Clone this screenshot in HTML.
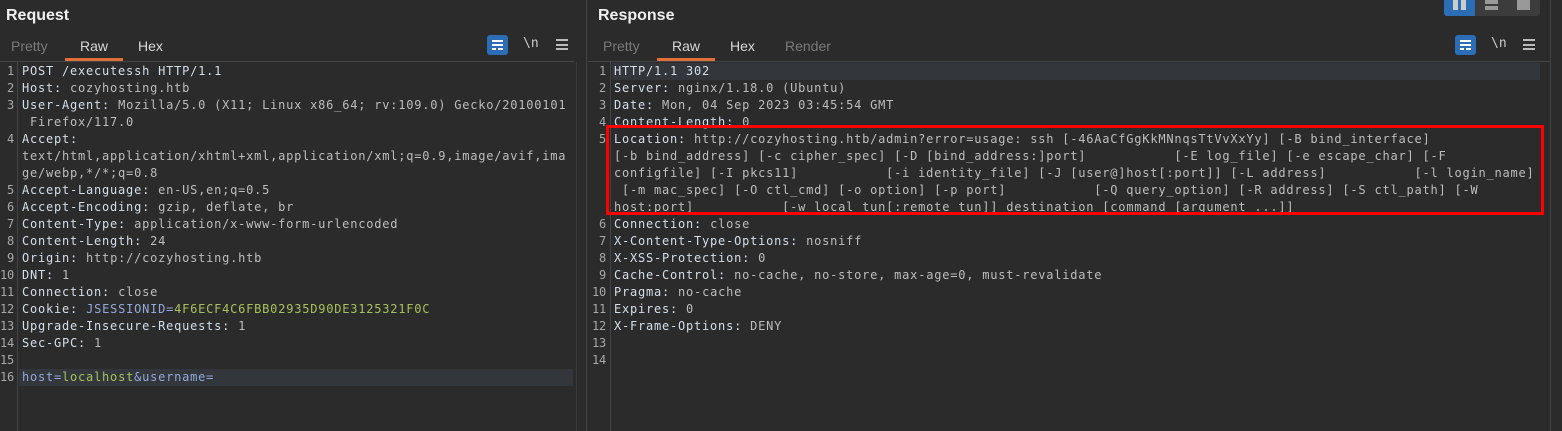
<!DOCTYPE html>
<html><head><meta charset="utf-8"><style>
*{margin:0;padding:0;box-sizing:border-box}
body{width:1562px;height:431px;background:#2b2b2b;overflow:hidden;position:relative;font-family:"Liberation Sans","DejaVu Sans",sans-serif}
.title{position:absolute;top:7px;font-size:16px;font-weight:bold;color:#f0f0f0}
.tab{position:absolute;top:38px;font-size:14px;color:#d8d8d8}
.dim{color:#7a7a7a}
.ul{position:absolute;top:58px;height:3px;background:#e0703a}
.hr{position:absolute;top:61px;height:1px;background:#444}
.vl{position:absolute;width:1px;background:#444}
.code{position:absolute;font-family:"DejaVu Sans Mono",monospace;font-size:12px;letter-spacing:0.78px;line-height:17px;white-space:pre;color:#bdbdbd}
.ln{position:absolute;font-family:"DejaVu Sans Mono",monospace;font-size:12px;letter-spacing:-0.2px;line-height:17px;white-space:pre;color:#a8a8a8;text-align:right}
.k{color:#d4deea}
.b{color:#93a9dc}
.g{color:#a7c25a}
.hl{position:absolute;height:17px;background:#33373b}
.wrap{position:absolute;top:35px;width:21px;height:20px;background:#2c6eb5;border-radius:3px}
.wrap i{position:absolute;left:5px;height:2px;background:#fff}
.nl{position:absolute;top:36px;font-family:"DejaVu Sans Mono",monospace;font-size:13px;color:#ccc}
.menu{position:absolute;top:39px;width:12px;height:11px;border-top:2px solid #bbb;border-bottom:2px solid #bbb}
.menu:after{content:"";position:absolute;left:0;right:0;top:2.5px;height:2px;background:#bbb}
</style></head><body>
<div class="title" style="left:6px">Request</div>
<div class="title" style="left:598px">Response</div>

<div class="tab dim" style="left:11px">Pretty</div>
<div class="tab" style="left:80px">Raw</div>
<div class="tab" style="left:138px">Hex</div>
<div class="ul" style="left:65px;width:58px"></div>
<div class="hr" style="left:0;width:574px"></div>

<div class="tab dim" style="left:603px">Pretty</div>
<div class="tab" style="left:672px">Raw</div>
<div class="tab" style="left:730px">Hex</div>
<div class="tab dim" style="left:785px">Render</div>
<div class="ul" style="left:657px;width:58px"></div>
<div class="hr" style="left:588px;width:962px"></div>

<div class="vl" style="left:586px;top:0;height:431px"></div>
<div class="vl" style="left:576px;top:62px;height:369px;background:#3a3a3a"></div>
<div class="vl" style="left:1550px;top:0;height:431px"></div>
<div class="vl" style="left:17px;top:62px;height:369px"></div>
<div class="vl" style="left:610px;top:62px;height:369px"></div>

<div class="wrap" style="left:487px"><i style="top:5px;width:11px"></i><i style="top:9px;width:11px"></i><i style="top:13px;width:4px"></i><i style="top:13px;left:11px;width:5px"></i></div>
<div class="nl" style="left:523px">\n</div>
<div class="menu" style="left:556px"></div>
<div class="wrap" style="left:1455px"><i style="top:5px;width:11px"></i><i style="top:9px;width:11px"></i><i style="top:13px;width:4px"></i><i style="top:13px;left:11px;width:5px"></i></div>
<div class="nl" style="left:1491px">\n</div>
<div class="menu" style="left:1523px"></div>

<div style="position:absolute;left:1444px;top:-4px;width:96px;height:20px;background:#3c3c3c;border-radius:3px"></div>
<div style="position:absolute;left:1444px;top:-4px;width:31px;height:20px;background:#2c6eb5;border-radius:3px 0 0 3px"></div>
<div style="position:absolute;left:1453px;top:0;width:5px;height:10px;background:#ccc"></div>
<div style="position:absolute;left:1461px;top:0;width:5px;height:10px;background:#ccc"></div>
<div style="position:absolute;left:1485px;top:0;width:13px;height:4px;background:#999"></div>
<div style="position:absolute;left:1485px;top:6px;width:13px;height:4px;background:#999"></div>
<div style="position:absolute;left:1517px;top:0;width:13px;height:10px;background:#999"></div>

<div class="hl" style="left:19px;top:369px;width:554px"></div>
<div class="ln" style="left:0;top:63px;width:14px">1
2
3

4


5
6
7
8
9
10
11
12
13
14
15
16</div>
<div class="code" style="left:22px;top:63px"><span class="k">POST /executessh HTTP/1.1</span>
<span class="k">Host:</span> cozyhosting.htb
<span class="k">User-Agent:</span> Mozilla/5.0 (X11; Linux x86_64; rv:109.0) Gecko/20100101
 Firefox/117.0
<span class="k">Accept:</span>
text/html,application/xhtml+xml,application/xml;q=0.9,image/avif,ima
ge/webp,*/*;q=0.8
<span class="k">Accept-Language:</span> en-US,en;q=0.5
<span class="k">Accept-Encoding:</span> gzip, deflate, br
<span class="k">Content-Type:</span> application/x-www-form-urlencoded
<span class="k">Content-Length:</span> 24
<span class="k">Origin:</span> http://cozyhosting.htb
<span class="k">DNT:</span> 1
<span class="k">Connection:</span> close
<span class="k">Cookie:</span> <span class="b">JSESSIONID=</span><span class="g">4F6ECF4C6FBB02935D90DE3125321F0C</span>
<span class="k">Upgrade-Insecure-Requests:</span> 1
<span class="k">Sec-GPC:</span> 1

<span class="b">host=</span><span class="g">localhost</span><span class="b">&amp;username=</span></div>

<div class="hl" style="left:612px;top:63px;width:928px"></div>
<div class="ln" style="left:590px;top:63px;width:16px">1
2
3
4
5




6
7
8
9
10
11
12
13
14</div>
<div class="code" style="left:614px;top:63px"><span class="k">HTTP/1.1 302</span>
<span class="k">Server:</span> nginx/1.18.0 (Ubuntu)
<span class="k">Date:</span> Mon, 04 Sep 2023 03:45:54 GMT
<span class="k">Content-Length:</span> 0
<span class="k">Location:</span> http://cozyhosting.htb/admin?error=usage: ssh [-46AaCfGgKkMNnqsTtVvXxYy] [-B bind_interface]
[-b bind_address] [-c cipher_spec] [-D [bind_address:]port]           [-E log_file] [-e escape_char] [-F
configfile] [-I pkcs11]           [-i identity_file] [-J [user@]host[:port]] [-L address]           [-l login_name]
 [-m mac_spec] [-O ctl_cmd] [-o option] [-p port]           [-Q query_option] [-R address] [-S ctl_path] [-W
host:port]           [-w local_tun[:remote_tun]] destination [command [argument ...]]
<span class="k">Connection:</span> close
<span class="k">X-Content-Type-Options:</span> nosniff
<span class="k">X-XSS-Protection:</span> 0
<span class="k">Cache-Control:</span> no-cache, no-store, max-age=0, must-revalidate
<span class="k">Pragma:</span> no-cache
<span class="k">Expires:</span> 0
<span class="k">X-Frame-Options:</span> DENY</div>
<div style="position:absolute;left:606px;top:125px;width:938px;height:90px;border:3px solid #f00"></div>
</body></html>
